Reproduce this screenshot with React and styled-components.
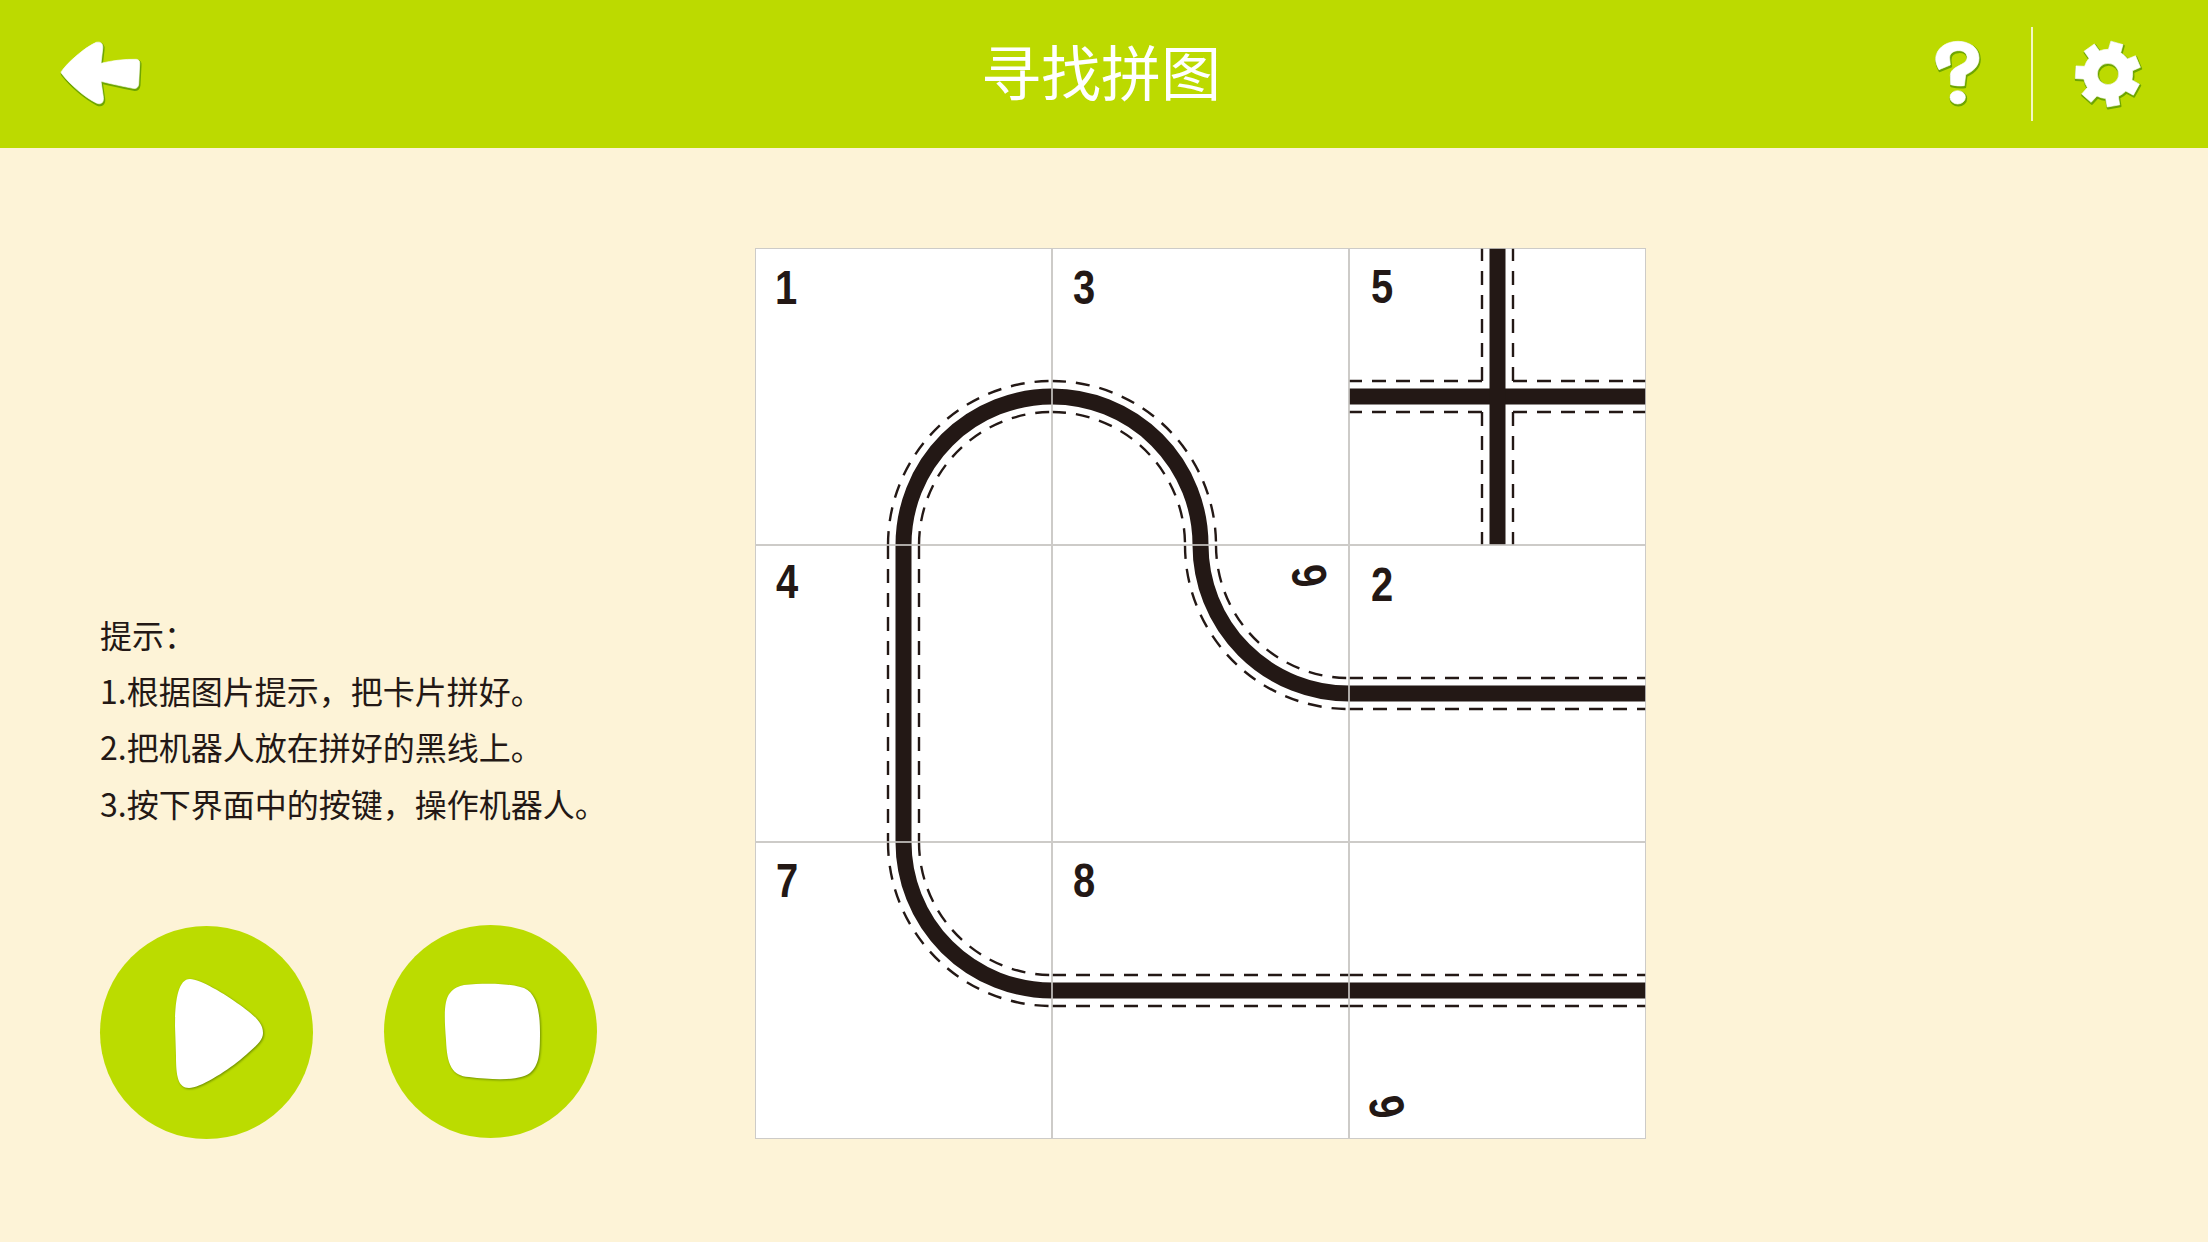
import React from "react";
import styled, { createGlobalStyle } from "styled-components";

const CJK = `"Noto Sans CJK SC", "Noto Sans", sans-serif`;
const INK = "#231815";

const GlobalStyle = createGlobalStyle`
  html, body {
    margin: 0;
    background: #fdf3d7;
  }
`;

const Page = styled.div`
  width: 2208px;
  height: 1242px;
  overflow: hidden;
  font-family: ${CJK};
  color: ${INK};
`;

const Header = styled.header`
  height: 148px;
  background: #bcda00;
  display: grid;
  grid-template-columns: 1fr auto 1fr;
  align-items: center;
  padding: 0 64px 0 58px;
`;

const Title = styled.h1`
  margin: 0 0 9px 0;
  font-size: 60px;
  line-height: 1;
  font-weight: 400;
  color: #fff;
`;

const HeaderRight = styled.div`
  display: flex;
  align-items: center;
  justify-content: flex-end;
`;

const Divider = styled.div`
  width: 2px;
  height: 94px;
  margin: 0 39px 0 48px;
  background: #f3f6c4;
`;

const IconButton = styled.button`
  display: flex;
  padding: 0;
  border: none;
  background: none;
`;

const Body = styled.main`
  display: flex;
  padding: 100px 0 0 100px;
`;

const Side = styled.section`
  width: 655px;
  height: 891px;
  display: flex;
  flex-direction: column;
  justify-content: flex-end;
`;

const Hint = styled.div`
  margin-bottom: 94px;
  font-size: 32px;
  line-height: 56.3px;
`;

const HintLine = styled.p`
  margin: 0;
`;

const Controls = styled.div`
  display: flex;
  align-items: flex-end;
  gap: 71px;
`;

const RoundButton = styled.button`
  display: flex;
  width: 213px;
  height: 213px;
  padding: 0;
  margin-bottom: ${(p) => (p.$raised ? "1px" : "0")};
  border: none;
  border-radius: 50%;
  background: #bbdc00;

  svg {
    filter: drop-shadow(1px 1px 1px #6f8f00);
  }
`;

const Board = styled.section`
  display: grid;
  grid-template-columns: repeat(3, 297px);
  grid-template-rows: repeat(3, 297px);
`;

const TileBox = styled.div`
  position: relative;
  background: #fff;

  &::after {
    content: "";
    position: absolute;
    inset: 0;
    border: 1px solid rgba(196, 194, 190, 0.85);
  }
`;

const TileArt = styled.svg`
  display: block;
`;

const TileNumber = styled.span`
  position: absolute;
  left: ${(p) => p.$x}px;
  top: ${(p) => p.$y}px;
  transform: translate(-50%, -50%) rotate(${(p) => p.$turn || 0}deg) scale(0.85, 1.04);
  font-family: "Liberation Sans", sans-serif;
  font-size: 47px;
  line-height: 1;
  font-weight: 700;
  color: ${INK};
`;

const Road = styled.path`
  fill: none;
  stroke: ${INK};
  stroke-width: 16;
`;

const Edge = styled.path`
  fill: none;
  stroke: ${INK};
  stroke-width: 2.4;
  stroke-dasharray: 14 10;
`;

// tile geometry: the road runs through the middle of each side
const S = 297;
const M = 148.5;
const GAP = 15.5;

const shapes = {
  cornerBR: (r) => `M${S - r} ${S}A${r} ${r} 0 0 1 ${S} ${S - r}`,
  cornerBL: (r) => `M0 ${S - r}A${r} ${r} 0 0 1 ${r} ${S}`,
  cornerTR: (r) => `M${S - r} 0A${r} ${r} 0 0 0 ${S} ${r}`,
  horizontal: (r) => `M0 ${r}H${S}`,
  vertical: (r) => `M${r} 0V${S}`,
};

const crossEdges = [
  `M${M - GAP} ${M - GAP}H0`,
  `M${M - GAP} ${M - GAP}V0`,
  `M${M + GAP} ${M - GAP}H${S}`,
  `M${M + GAP} ${M - GAP}V0`,
  `M${M - GAP} ${M + GAP}H0`,
  `M${M - GAP} ${M + GAP}V${S}`,
  `M${M + GAP} ${M + GAP}H${S}`,
  `M${M + GAP} ${M + GAP}V${S}`,
];

const tiles = [
  { n: "1", x: 31, y: 39, shape: "cornerBR" },
  { n: "3", x: 32, y: 39, shape: "cornerBL" },
  { n: "5", x: 33, y: 38, shape: "cross" },
  { n: "4", x: 32, y: 36, shape: "vertical" },
  { n: "6", x: 257, y: 31, turn: -100, shape: "cornerTR" },
  { n: "2", x: 33, y: 39, shape: "horizontal" },
  { n: "7", x: 32, y: 38, shape: "cornerTR" },
  { n: "8", x: 32, y: 38, shape: "horizontal" },
  { n: "9", x: 38, y: 265, turn: 80, shape: "horizontal" },
];

const Tile = ({ n, x, y, turn, shape }) => {
  const draw = shapes[shape];
  return (
    <TileBox>
      <TileArt width={S} height={S} viewBox={`0 0 ${S} ${S}`}>
        {shape === "cross" ? (
          <>
            <Road d={shapes.horizontal(M)} />
            <Road d={shapes.vertical(M)} />
            {crossEdges.map((d) => (
              <Edge key={d} d={d} />
            ))}
          </>
        ) : (
          <>
            <Road d={draw(M)} />
            <Edge d={draw(M - GAP)} />
            <Edge d={draw(M + GAP)} />
          </>
        )}
      </TileArt>
      <TileNumber $x={x} $y={y} $turn={turn}>
        {n}
      </TileNumber>
    </TileBox>
  );
};

// white sticker shape with a green rim, shifted a little down and right
const Sticker = ({ width, height, viewBox, d, children }) => (
  <svg width={width} height={height} viewBox={viewBox}>
    <g transform="translate(2 4)" fill="#6ea500" stroke="#6ea500" strokeWidth="7" strokeLinejoin="round">
      <path d={d} fillRule="evenodd" />
      {children}
    </g>
    <g fill="#fff" stroke="#fff" strokeWidth="2" strokeLinejoin="round">
      <path d={d} fillRule="evenodd" />
      {children}
    </g>
  </svg>
);

const BACK_ARROW =
  "M182 215C200 190 250 145 285 130C300 127 306 135 304 150L299 193C330 185 370 180 405 181C413 182 416 188 415 195L412 255C411 265 405 270 395 268C365 262 330 255 299 247L306 295C308 312 298 318 285 312C250 295 205 255 182 225C178 220 179 218 182 215Z";

const QUESTION =
  "M178 210C170 195 165 180 170 165C178 140 205 125 235 125C270 125 298 145 298 175C298 200 280 215 258 225L254 258C240 260 225 258 213 255L212 228C212 212 225 205 240 197C255 190 264 182 262 170C260 158 248 152 234 153C220 154 208 162 210 178L212 196Z";

// seven teeth around (682, 220) in 3x units
const gearPath = () => {
  const cx = 682;
  const cy = 220;
  const point = (deg, r) => {
    const a = ((deg - 90) * Math.PI) / 180;
    return `${(cx + r * Math.cos(a)).toFixed(1)} ${(cy + r * Math.sin(a)).toFixed(1)}`;
  };
  let d = "";
  for (let i = 0; i < 7; i++) {
    const a = 16 + (i * 360) / 7;
    d += `${i ? "L" : "M"}${point(a - 15, 74)}L${point(a - 11, 99)}L${point(a + 11, 99)}L${point(a + 15, 74)}`;
    d += `A74 74 0 0 1 ${point(a + 360 / 7 - 15, 74)}`;
  }
  d += `ZM${cx + 32} ${cy}A32 32 0 1 0 ${cx - 32} ${cy}A32 32 0 1 0 ${cx + 32} ${cy}Z`;
  return d;
};

const PLAY =
  "M75 100C75 75 78 53 90 53C100 53 125 68 140 79C155 90 163 97 163 107C163 115 155 121 140 134C125 146 100 162 89 162C78 162 76 150 76 130Z";

const STOP =
  "M80 60C100 58 125 58 140 63C152 68 156 85 156 107C156 130 155 140 146 148C135 156 110 155 85 152C68 151 63 140 62 115C60 90 60 75 66 68C70 63 75 61 80 60Z";

const hintLines = [
  "提示：",
  "1.根据图片提示，把卡片拼好。",
  "2.把机器人放在拼好的黑线上。",
  "3.按下界面中的按键，操作机器人。",
];

const App = () => (
  <Page>
    <GlobalStyle />
    <Header>
      <div>
        <IconButton aria-label="back">
          <Sticker width={87} height={70} viewBox="170 120 261 210" d={BACK_ARROW} />
        </IconButton>
      </div>
      <Title>寻找拼图</Title>
      <HeaderRight>
        <IconButton aria-label="help">
          <Sticker width={50} height={70} viewBox="160 118 150 210" d={QUESTION}>
            <ellipse cx="234" cy="293" rx="23" ry="20" />
          </Sticker>
        </IconButton>
        <Divider />
        <IconButton aria-label="settings">
          <Sticker width={72} height={72} viewBox="574 112 216 216" d={gearPath()} />
        </IconButton>
      </HeaderRight>
    </Header>
    <Body>
      <Side>
        <Hint>
          {hintLines.map((line) => (
            <HintLine key={line}>{line}</HintLine>
          ))}
        </Hint>
        <Controls>
          <RoundButton aria-label="play">
            <svg width="213" height="213" viewBox="0 0 213 213">
              <path d={PLAY} fill="#fff" />
            </svg>
          </RoundButton>
          <RoundButton aria-label="stop" $raised>
            <svg width="213" height="213" viewBox="0 0 213 213">
              <path d={STOP} fill="#fff" />
            </svg>
          </RoundButton>
        </Controls>
      </Side>
      <Board>
        {tiles.map((tile) => (
          <Tile key={tile.n} {...tile} />
        ))}
      </Board>
    </Body>
  </Page>
);

export default App;
